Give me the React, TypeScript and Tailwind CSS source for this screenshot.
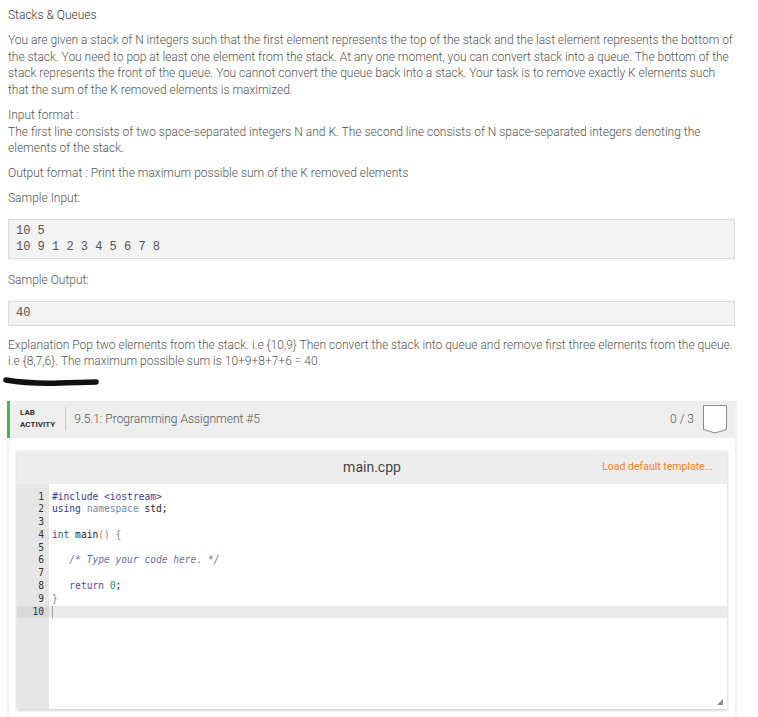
import React from 'react';

const code = [
  [<><span className="text-[#3a3aa0]">#include</span> <span className="text-[#3a3aa0]">&lt;iostream&gt;</span></>],
  [<><span className="text-[#2a3a9a]">using</span> <span className="text-[#6c8cb0]">namespace</span> <span className="text-[#222]">std</span>;</>],
  [<></>],
  [<><span className="text-[#1f4f8f]">int</span> <span className="text-[#222]">main</span><span className="text-[#888]">() {'{'}</span></>],
  [<></>],
  [<>{'   '}<span className="italic text-[#6f6f9a]">/* Type your code here. */</span></>],
  [<></>],
  [<>{'   '}<span className="text-[#6a3aa8]">return</span> <span className="text-[#1a9a6a]">0</span>;</>],
  [<><span className="text-[#888]">{'}'}</span></>],
  [<></>],
];

const intro = [
  'You are given a stack of N integers such that the first element represents the top of the stack and the last element represents the bottom of',
  'the stack. You need to pop at least one element from the stack. At any one moment, you can convert stack into a queue. The bottom of the',
  'stack represents the front of the queue. You cannot convert the queue back into a stack. Your task is to remove exactly K elements such',
  'that the sum of the K removed elements is maximized.',
];

export default function App() {
  return (
    <div className="w-[758px] h-[717px] overflow-hidden bg-white font-['Roboto',sans-serif] text-[12px] font-light text-[#555]">
      <div className="w-[735px] pl-2">
        <div className="pt-[7px] leading-4 text-[#3a3a3a]">Stacks &amp; Queues</div>
        <p className="mt-[9px] leading-[16.5px] whitespace-nowrap tracking-[-0.02px]">
          {intro.map((l, i) => (
            <span key={i} className="block">{l}</span>
          ))}
        </p>
        <div className="mt-[9px] leading-[16.5px]">
          <div>Input format :</div>
          <div>
            The first line consists of two space-separated integers N and K. The second line consists of N space-separated integers denoting the
            elements of the stack.
          </div>
        </div>
        <div className="mt-[8px] leading-4">Output format : Print the maximum possible sum of the K removed elements</div>
        <div className="mt-[9px] leading-4">Sample Input:</div>
        <div className="mt-[13px] border border-[#dcdcdc] bg-[#f3f3f3] px-[7px] pt-[3px] pb-[3px] font-['Liberation_Mono',monospace] text-[12px] font-normal leading-4 text-[#555]">
          <div>10 5</div>
          <div>10 9 1 2 3 4 5 6 7 8</div>
        </div>
        <div className="mt-[13px] leading-4">Sample Output:</div>
        <div className="mt-[13px] border border-[#dcdcdc] bg-[#f3f3f3] px-[7px] pt-[3px] pb-1 font-['Liberation_Mono',monospace] text-[12px] font-normal leading-4 text-[#555]">
          40
        </div>
        <p className="mt-[11px] leading-[16.5px]">
          Explanation Pop two elements from the stack. i.e {'{10,9}'} Then convert the stack into queue and remove first three elements from the queue.
          <br />
          i.e {'{8,7,6}'}. The maximum possible sum is 10+9+8+7+6 = 40
        </p>
      </div>

      <svg width="110" height="16" className="mt-[3px] block">
        <path d="M6 7 Q 30 11 60 10 T 96 9" stroke="#111" strokeWidth="5.5" fill="none" strokeLinecap="round" />
      </svg>

      <div className="ml-[7px] mt-[12px] w-[730px] h-[320px] border-r-2 border-[#f1f1f1]">
        <div className="flex h-[37px] items-center bg-[#eeeeee] border-l-[3px] border-[#4caf50]">
          <div className="ml-[10px] text-[8px] font-bold leading-[12px] text-[#333]">
            <div>LAB</div>
            <div>ACTIVITY</div>
          </div>
          <div className="ml-[10px] h-6 w-px bg-[#c8c8c8]" />
          <div className="ml-2 text-[12px] text-[#555]">9.5.1: Programming Assignment #5</div>
          <div className="ml-auto text-[12px] text-[#555]">0 / 3</div>
          <svg width="26" height="30" className="ml-[8px] mr-[7px]">
            <path d="M1.5 1.5 H24.5 V25.5 L13 29 L1.5 25.5 Z" fill="white" stroke="#8a8a8a" strokeWidth="1" />
          </svg>
        </div>
        <div className="border-l-2 border-[#f1f1f1] h-[283px] pt-[13px]">
          <div className="ml-2 w-[710px] h-[258px] bg-white shadow-[0_1px_3px_rgba(0,0,0,0.25)] flex flex-col">
            <div className="relative flex h-[33px] items-center justify-center bg-[#ededed]">
              <span className="text-[14px] font-normal text-[#444]">main.cpp</span>
              <span className="absolute right-[14px] text-[10.5px] font-normal text-[#f5821f]">Load default template...</span>
            </div>
            <div className="relative flex flex-1 font-['DejaVu_Sans_Mono',monospace] text-[9.6px] font-normal leading-[12.8px] text-[#222]">
              <div className="w-[32px] bg-[#e6e6e6] pt-[7px] text-right text-[#333]">
                {code.map((_, i) => (
                  <div key={i} className={i === 9 ? 'bg-[#d9d9d9] pr-[5px]' : 'pr-[5px]'}>{i + 1}</div>
                ))}
              </div>
              <div className="flex-1 pt-[7px]">
                {code.map((c, i) => (
                  <div key={i} className={i === 9 ? 'bg-[#ebebeb] h-[12.8px] whitespace-pre pl-[3px]' : 'h-[12.8px] whitespace-pre pl-[3px]'}>
                    {i === 9 ? <span className="inline-block h-[12px] w-px bg-[#999] align-middle" /> : c}
                  </div>
                ))}
              </div>
              <svg width="8" height="8" className="absolute right-[3px] bottom-[3px]">
                <path d="M7 1 L7 7 L1 7 Z" fill="#8a8a8a" />
              </svg>
            </div>
          </div>
        </div>
      </div>
    </div>
  );
}
